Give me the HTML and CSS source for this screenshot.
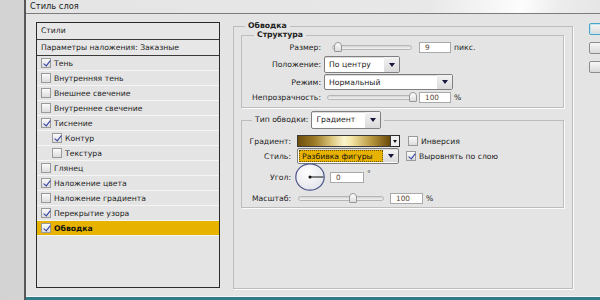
FILE: index.html
```html
<!DOCTYPE html>
<html lang="ru">
<head>
    <meta charset="UTF-8">
    <title>Стиль слоя</title>
    <link rel="stylesheet" href="styles.css">
</head>
<body>
<div class="window">
    <div class="titlebar">Стиль слоя</div>
    <div class="dialog">
        <!-- list of layer effects -->
        <div class="style-list">
            <div class="list-head first">Стили</div>
            <div class="list-head">Параметры наложения: Заказные</div>
            <div class="item"><span class="cb on"></span>Тень</div>
            <div class="item"><span class="cb"></span>Внутренняя тень</div>
            <div class="item"><span class="cb"></span>Внешнее свечение</div>
            <div class="item"><span class="cb"></span>Внутреннее свечение</div>
            <div class="item"><span class="cb on"></span>Тиснение</div>
            <div class="item sub"><span class="cb on"></span>Контур</div>
            <div class="item sub"><span class="cb"></span>Текстура</div>
            <div class="item"><span class="cb"></span>Глянец</div>
            <div class="item"><span class="cb on"></span>Наложение цвета</div>
            <div class="item"><span class="cb"></span>Наложение градиента</div>
            <div class="item"><span class="cb on"></span>Перекрытие узора</div>
            <div class="item active"><span class="cb on"></span>Обводка</div>
        </div>

        <fieldset class="group stroke">
            <legend>Обводка</legend>

            <fieldset class="group structure">
                <legend>Структура</legend>
                <div class="row r-size">
                    <span class="lbl">Размер:</span>
                    <div class="slider s-size"><span class="thumb" style="left:1px"></span></div>
                    <span class="field f-size">9</span>
                    <span class="unit">пикс.</span>
                </div>
                <div class="row r-pos">
                    <span class="lbl">Положение:</span>
                    <div class="select sel-pos">По центру<span class="drop"></span></div>
                </div>
                <div class="row r-mode">
                    <span class="lbl">Режим:</span>
                    <div class="select sel-mode">Нормальный<span class="drop"></span></div>
                </div>
                <div class="row r-opac">
                    <span class="lbl">Непрозрачность:</span>
                    <div class="slider s-opac"><span class="thumb" style="left:81px"></span></div>
                    <span class="field f-opac">100</span>
                    <span class="unit">%</span>
                </div>
            </fieldset>

            <fieldset class="group fill">
                <legend>
                    <span class="legend-lbl">Тип обводки:</span>
                    <span class="select sel-type">Градиент<span class="drop"></span></span>
                </legend>
                <div class="row r-grad">
                    <span class="lbl">Градиент:</span>
                    <div class="swatch"></div>
                    <span class="swatch-btn"></span>
                    <span class="cb cb-inv"></span>
                    <span class="check-lbl">Инверсия</span>
                </div>
                <div class="row r-style">
                    <span class="lbl">Стиль:</span>
                    <div class="select sel-style"><span class="hl">Разбивка фигуры</span><span class="drop"></span></div>
                    <span class="cb on cb-align"></span>
                    <span class="check-lbl">Выровнять по слою</span>
                </div>
                <div class="row r-angle">
                    <span class="lbl">Угол:</span>
                    <svg class="dial" width="30" height="28" viewBox="0 0 30 28">
                        <defs>
                            <radialGradient id="dialFill" cx="0.4" cy="0.35" r="0.7">
                                <stop offset="0" stop-color="#ffffff"/>
                                <stop offset="1" stop-color="#e2e3ea"/>
                            </radialGradient>
                        </defs>
                        <ellipse cx="15" cy="14" rx="14.2" ry="13.2" fill="url(#dialFill)" stroke="#4d5688" stroke-width="1.2"/>
                        <line x1="15" y1="14" x2="28.5" y2="14" stroke="#111" stroke-width="1"/>
                        <circle cx="15" cy="14" r="1.5" fill="#111"/>
                    </svg>
                    <span class="field f-angle">0</span>
                    <span class="unit deg">°</span>
                </div>
                <div class="row r-scale">
                    <span class="lbl">Масштаб:</span>
                    <div class="slider s-scale"><span class="thumb" style="left:50px"></span></div>
                    <span class="field f-scale">100</span>
                    <span class="unit">%</span>
                </div>
            </fieldset>
        </fieldset>

        <div class="buttons">
            <button class="btn focus"></button>
            <button class="btn"></button>
            <button class="btn"></button>
        </div>
    </div>
    <div class="taskbar"></div>
</div>
</body>
</html>
```

FILE: styles.css
```css
* {
    box-sizing: border-box;
}
html, body {
    margin: 0;
    height: 300px;
    overflow: hidden;
}
body {
    background: linear-gradient(90deg, #d3d3d3, #dedede);
    font-family: "DejaVu Sans", sans-serif;
    font-size: 7.7px;
    color: #1d1d1d;
    padding-left: 24px;
}
.window {
    height: 300px;
    background: #e4e4e4;
    border-left: 2px solid #575757;
    display: flex;
    flex-direction: column;
}
.titlebar {
    height: 14px;
    line-height: 13px;
    padding-left: 4px;
    font-size: 8.3px;
    color: #222;
    border-bottom: 1px solid #7c7c7c;
    background: linear-gradient(100deg, #e4e4e4 0%, #e8e8e8 70%, #f6f6f6 81%, #fdfdfd 86%, #ececec 93%, #e6e6e6 100%);
}
.dialog {
    flex: 1;
    display: flex;
    align-items: flex-start;
    border-bottom: 1px solid #f6f6f6;
}
.taskbar {
    height: 3px;
    background: #2f7d88;
}

/* Effects list */
.style-list {
    width: 184px;
    height: 266px;
    margin: 8px 0 0 10px;
    border: 1px solid #2b2b2b;
    background: #e4e4e4;
    flex: none;
}
.list-head {
    height: 16px;
    line-height: 15px;
    padding-left: 4px;
    border-bottom: 1px solid #3a3a3a;
    background: #e7e7e7;
}
.list-head.first {
    height: 17px;
    line-height: 16px;
}
.item {
    height: 15px;
    display: flex;
    align-items: center;
    padding-left: 4px;
    border-bottom: 1px solid #f5f5f5;
}
.item.sub {
    padding-left: 15px;
}
.item.active {
    background: #e8b300;
    font-weight: bold;
    color: #111;
}
.cb {
    width: 10px;
    height: 10px;
    border: 1px solid #9a9a9a;
    background: linear-gradient(#fbfbfb, #dcdcdc);
    position: relative;
    flex: none;
    margin-right: 3px;
}
.cb.on::after {
    content: "";
    position: absolute;
    left: 3px;
    top: 0;
    width: 3px;
    height: 6px;
    border: solid #2f3fa6;
    border-width: 0 1.5px 1.5px 0;
    transform: rotate(38deg);
}

/* Group boxes */
fieldset.group {
    margin: 0;
    padding: 0;
    min-width: 0;
    border: 1px solid #bdbdbd;
    box-shadow: 1px 1px 0 #fbfbfb;
}
fieldset.group legend {
    padding: 0 3px;
    line-height: 10px;
    font-weight: bold;
}
.stroke {
    width: 340px;
    height: 268px;
    margin: 7px 0 0 13px !important;
    padding: 0 8px 0 7px !important;
    flex: none;
}
.stroke > legend {
    margin-left: 4px;
}
.structure {
    margin-top: -1px !important;
    padding-bottom: 3px !important;
}
.structure > legend {
    margin-left: 12px;
}
.fill {
    margin-top: 3px !important;
    padding-bottom: 3px !important;
}
.fill > legend {
    margin-left: 10px;
    font-weight: normal !important;
    line-height: 18px !important;
    display: flex;
    align-items: center;
}
.legend-lbl {
    margin-right: 3px;
}

.row {
    display: flex;
    align-items: center;
}
.lbl {
    text-align: right;
    flex: none;
}
.structure .lbl {
    width: 79px;
    margin-right: 3px;
}
.fill .lbl {
    width: 49px;
    margin-right: 6px;
}
.r-size { height: 12px; margin-top: 1px; }
.r-pos { height: 17px; margin-top: 3px; }
.r-mode { height: 16px; margin-top: 1px; }
.r-opac { height: 13px; margin-top: 1px; }
.r-grad { height: 12px; margin-top: 6px; }
.r-style { height: 16px; margin-top: 1px; }
.r-angle { height: 28px; margin-top: -1px; }
.r-scale { height: 12px; margin-top: 1px; }

/* Controls */
.select {
    display: flex;
    align-items: center;
    height: 100%;
    border: 1px solid #7f7f7f;
    border-radius: 2px;
    background: #fff;
    padding-left: 4px;
    box-shadow: inset 0 1px 0 #dcdcdc;
    flex: none;
}
.drop {
    margin-left: auto;
    width: 15px;
    height: 100%;
    background: linear-gradient(#f2f2f2, #dadada);
    display: flex;
    align-items: center;
    justify-content: center;
}
.drop::after {
    content: "";
    border: 3.5px solid transparent;
    border-top: 4px solid #16163c;
    border-bottom: 0;
}
.sel-pos { width: 76px; }
.sel-mode { width: 129px; }
.sel-type { width: 70px; height: 18px; }
.sel-style {
    width: 102px;
    padding: 1px 0 1px 1px;
}
.hl {
    flex: 1;
    height: 100%;
    background: #e8b300;
    border: 1px dotted #6b5400;
    padding-left: 2px;
    line-height: 11px;
    color: #111;
}

.field {
    height: 11px;
    line-height: 9px;
    border: 1px solid #a9a9a9;
    background: #fff;
    padding-left: 5px;
    color: #5c4633;
    font-size: 7.3px;
    flex: none;
}
.unit {
    margin-left: 3px;
}
.deg {
    align-self: flex-start;
    margin-top: 6px;
}
.f-size { width: 32px; margin-left: 7px; }
.f-opac { width: 32px; margin-left: 5px; }
.f-angle { width: 34px; margin-left: 5px; }
.f-scale { width: 33px; margin-left: 6px; }

.slider {
    position: relative;
    height: 5px;
    border-radius: 3px;
    border: 1px solid #b5b5b5;
    background: linear-gradient(#d4d4d4, #f3f3f3);
    flex: none;
}
.thumb {
    position: absolute;
    top: -4px;
    width: 8px;
    height: 10px;
    border: 1px solid #979797;
    border-radius: 4px 4px 1px 1px;
    background: linear-gradient(#ffffff, #dcdcdc);
}
.s-size { width: 80px; margin-left: 8px; }
.s-opac { width: 87px; margin-left: 3px; }
.s-scale { width: 86px; margin-left: 1px; }

.swatch {
    width: 94px;
    height: 12px;
    border: 1px solid #3a3a3a;
    background: linear-gradient(90deg, #6e4e0c 0%, #9c7a26 18%, #d9c47a 36%, #fbf4cc 50%, #f3e6a6 58%, #b8963e 80%, #6a4a0a 100%);
    flex: none;
}
.swatch-btn {
    width: 9px;
    height: 12px;
    border: 1px solid #2a2a2a;
    border-left: 0;
    background: #efefef;
    display: flex;
    align-items: center;
    justify-content: center;
    flex: none;
}
.swatch-btn::after {
    content: "";
    border: 2.5px solid transparent;
    border-top: 3px solid #111;
    border-bottom: 0;
}
.cb-inv { margin-left: 8px; }
.cb-align { margin-left: 7px; }
.dial {
    margin-left: -2px;
    flex: none;
}

/* Dialog buttons, cut off at the right edge */
.buttons {
    margin: 9px 0 0 16px;
    display: flex;
    flex-direction: column;
    gap: 7px;
}
.btn {
    width: 40px;
    height: 12px;
    padding: 0;
    border: 1px solid #8c8c8c;
    border-radius: 2px;
    background: linear-gradient(#f7f7f7, #dadada);
}
.btn.focus {
    border-color: #4aa6c6;
    box-shadow: inset 0 0 0 1px #c4e4ef;
}
```
